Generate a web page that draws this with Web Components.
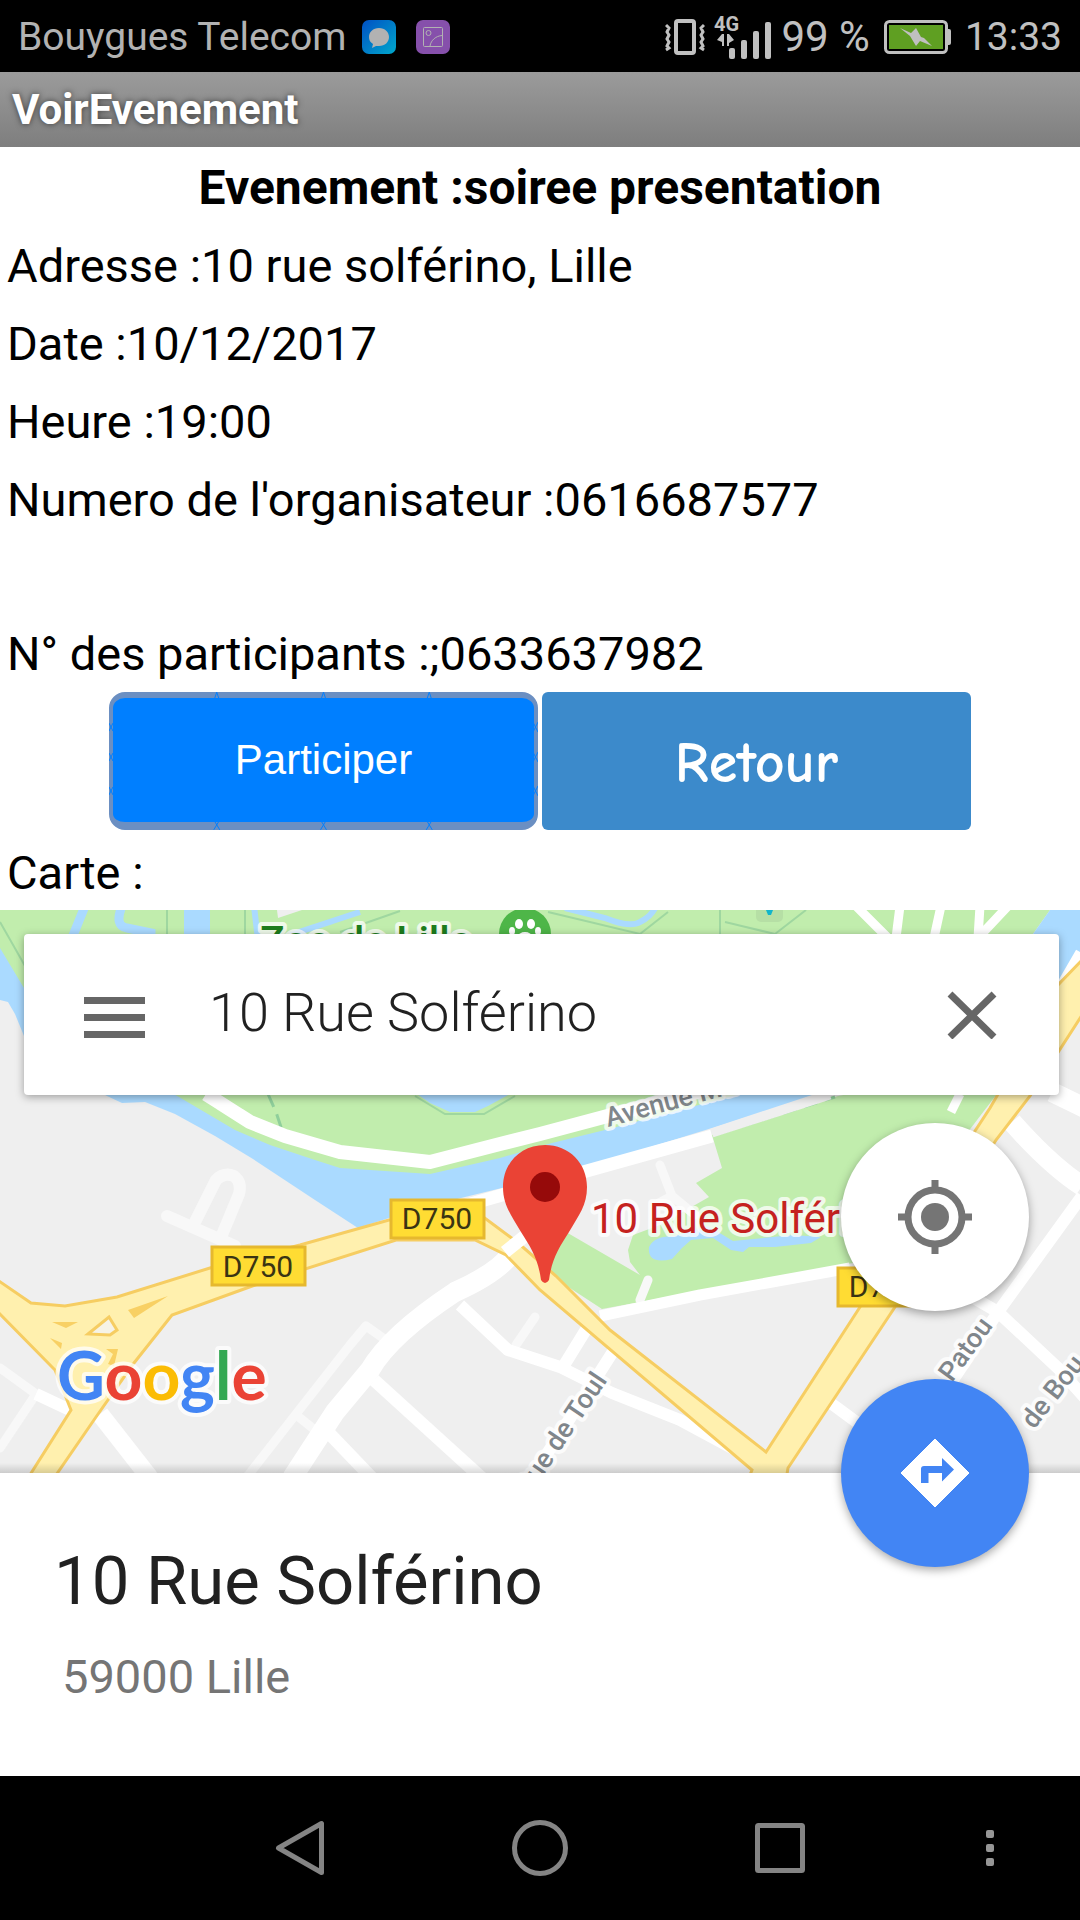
<!DOCTYPE html>
<html lang="fr">
<head>
<meta charset="utf-8">
<meta name="viewport" content="width=device-width, initial-scale=1">
<title>VoirEvenement</title>
<style>
  body {
    margin: 0;
    background: #fff;
    font-family: Roboto, "Liberation Sans", sans-serif;
  }
</style>
</head>
<body>

<event-screen>
  <status-bar slot="status" carrier="Bouygues Telecom" battery="99 %" time="13:33"></status-bar>
  <title-bar slot="title">VoirEvenement</title-bar>

  <event-line heading>Evenement :soiree presentation</event-line>
  <event-line>Adresse :10 rue solférino, Lille</event-line>
  <event-line>Date :10/12/2017</event-line>
  <event-line>Heure :19:00</event-line>
  <event-line>Numero de l'organisateur :0616687577</event-line>
  <event-line empty></event-line>
  <event-line>N° des participants :;0633637982</event-line>
  <button-row>
    <image-button kind="join">Participer</image-button>
    <image-button kind="back">Retour</image-button>
  </button-row>
  <event-line>Carte :</event-line>

  <map-view slot="map">
    <map-search slot="search" value="10 Rue Solférino"></map-search>
    <round-button slot="locate" label="Ma position">
      <svg width="76" height="76" viewBox="0 0 76 76" fill="none" stroke="#757575">
        <circle cx="38" cy="38" r="27" stroke-width="7"/>
        <circle cx="38" cy="38" r="14" fill="#757575" stroke="none"/>
        <path d="M38 1v11M38 64v11M1 38h11M64 38h11" stroke-width="7"/>
      </svg>
    </round-button>
    <round-button slot="directions" label="Itinéraire" primary>
      <svg width="70" height="70" viewBox="0 0 70 70">
        <path d="M35 1 69 35 35 69 1 35Z" fill="#fff" stroke="#fff" stroke-linejoin="round"/>
        <path d="M21 45V31q0-3 3-3h18v-8l12 11.500-12 12V35H28.500v10z" fill="#4285f4"/>
      </svg>
    </round-button>
  </map-view>
  <place-sheet slot="sheet">
    10 Rue Solférino
    <span slot="city">59000 Lille</span>
  </place-sheet>

  <nav-bar slot="nav"></nav-bar>
</event-screen>

<script>
  // Clones the markup of the subclass into an open shadow root
  class BaseElement extends HTMLElement {
    constructor() {
      super();
      const template = document.createElement("template");
      template.innerHTML = this.constructor.markup;
      this.attachShadow({ mode: "open" }).appendChild(template.content.cloneNode(true));
    }

    $(selector) {
      return this.shadowRoot.querySelector(selector);
    }
  }

  class EventScreen extends BaseElement {
    static markup = `
      <style>
        :host {
          display: flex;
          flex-direction: column;
          min-height: 100vh;
        }
        main {
          display: flex;
          flex-direction: column;
          flex: 1;
        }
        slot[name="sheet"]::slotted(*) {
          flex: 1;
        }
      </style>
      <slot name="status"></slot>
      <slot name="title"></slot>
      <main>
        <slot></slot>
        <slot name="map"></slot>
        <slot name="sheet"></slot>
      </main>
      <slot name="nav"></slot>
    `;
  }

  class StatusBar extends BaseElement {
    static markup = `
      <style>
        :host {
          display: flex;
          align-items: center;
          justify-content: space-between;
          box-sizing: border-box;
          height: 72px;
          padding: 2px 18px 0;
          background: #000;
          color: #b2b2b2;
          font-size: 39px;
          line-height: 70px;
          white-space: nowrap;
        }
        div {
          display: flex;
          align-items: center;
        }
        .apps { gap: 16px; }
        .apps svg + svg { margin-left: 4px; }
        .state { gap: 8px; color: #c0c0c0; }
        .battery { margin: 0 6px; }
        #battery { font-size: 42px; }
        svg { display: block; }
      </style>
      <div class="apps">
        <span id="carrier"></span>
        <svg width="34" height="34" viewBox="0 0 34 34">
          <defs>
            <linearGradient id="chat" x1="0" y1="0" x2="1" y2="1">
              <stop offset="0" stop-color="#0050c4"/>
              <stop offset="1" stop-color="#00a8cc"/>
            </linearGradient>
          </defs>
          <rect width="34" height="34" rx="7" fill="url(#chat)"/>
          <path d="M17 8c6 0 10 4 10 9s-4 9-10 9h-3l-4 2 1-4c-3-2-4-4-4-7 0-5 4-9 10-9z" fill="#b2b2b2"/>
        </svg>
        <svg width="34" height="34" viewBox="0 0 34 34" fill="none" stroke="#b2b2b2">
          <rect width="34" height="34" rx="7" fill="#8650ab" stroke="none"/>
          <rect x="7.500" y="7.500" width="19" height="19" rx="1"/>
          <circle cx="12.500" cy="13" r="2.500"/>
          <path d="M14 26c1-6 6-10 12-10.500"/>
        </svg>
      </div>
      <div class="state">
        <svg width="40" height="36" viewBox="0 0 40 36" fill="none" stroke="#c0c0c0">
          <rect x="11" y="2" width="18" height="32" rx="2" stroke-width="4"/>
          <path d="M1 6l3 3-2 4 2 3-2 4 2 3-2 4 2 2-3 2M39 6l-3 3 2 4-2 3 2 4-2 3 2 4-2 2 3 2" stroke-width="3"/>
        </svg>
        <svg width="60" height="48" viewBox="0 0 60 48" fill="#c0c0c0">
          <text x="1" y="18" font-size="20" font-weight="700">4G</text>
          <path d="M4 27l5-6h2v12H9v-4zM14 21h2l5 6-5 3v3h-2z"/>
          <rect x="16" y="35" width="6" height="11" rx="2"/>
          <rect x="28" y="27" width="6" height="19" rx="2"/>
          <rect x="40" y="18" width="6" height="28" rx="2"/>
          <rect x="52" y="9" width="6" height="37" rx="2"/>
        </svg>
        <span id="battery"></span>
        <svg class="battery" width="67" height="34" viewBox="0 0 67 34">
          <rect x="1.500" y="1.500" width="61" height="31" rx="4" fill="#000" stroke="#c0c0c0" stroke-width="3"/>
          <rect x="5" y="5" width="54" height="24" fill="#5f9f22"/>
          <path d="M64 9h1q2 0 2 2v12q0 2-2 2h-1z" fill="#c0c0c0"/>
          <path d="M16 8l11 5 5-5 5 9 3 1 8 8-12-5-4 5-6-10z" fill="#c0c0c0"/>
        </svg>
        <span id="time"></span>
      </div>
    `;

    connectedCallback() {
      for (const name of ["carrier", "battery", "time"]) {
        this.$("#" + name).textContent = this.getAttribute(name);
      }
    }
  }

  class TitleBar extends BaseElement {
    static markup = `
      <style>
        :host {
          display: block;
          background: linear-gradient(#9b9b9b, #7e7e7e);
        }
        h1 {
          margin: 0;
          padding: 0 12px;
          color: #fff;
          font-size: 42px;
          font-weight: 700;
          line-height: 75px;
          text-shadow: 0 0 6px rgba(0, 0, 0, .6);
        }
      </style>
      <h1><slot></slot></h1>
    `;
  }

  class EventLine extends BaseElement {
    static markup = `
      <style>
        :host {
          display: block;
          padding: 4px 7px 0;
          color: #000;
          font-size: 47px;
          line-height: 74px;
        }
        :host([heading]) {
          font-size: 48px;
          font-weight: 700;
          text-align: center;
        }
        :host([empty]) {
          height: 72px;
        }
      </style>
      <slot></slot>
    `;
  }

  class ButtonRow extends BaseElement {
    static markup = `
      <style>
        :host {
          display: flex;
          justify-content: center;
          gap: 4px;
          padding: 1px 0 2px;
        }
      </style>
      <slot></slot>
    `;
  }

  class ImageButton extends BaseElement {
    static markup = `
      <style>
        :host {
          display: block;
          position: relative;
          flex: 0 1 429px;
        }
        button {
          display: block;
          box-sizing: border-box;
          width: 100%;
          height: 138px;
          padding: 4px 0 0;
          border: 0;
          border-radius: 6px;
          background: #3c8acb;
          color: #fff;
          font-family: "Comic Sans MS", "Comic Neue", Lato, sans-serif;
          font-size: 58px;
          font-weight: 700;
        }
        :host([kind="join"]) button {
          padding: 0;
          border: solid #6b8fc2;
          border-width: 6px 4px 8px;
          border-radius: 16px;
          background: #007fff;
          font-family: "Liberation Sans", sans-serif;
          font-size: 42px;
          font-weight: 400;
        }
        svg {
          position: absolute;
          inset: 0;
          width: 100%;
          height: 100%;
          pointer-events: none;
        }
        :host([kind="back"]) svg { display: none; }
      </style>
      <button type="button"><slot></slot></button>
      <svg viewBox="0 0 430 138" fill="none" stroke="#007fff">
        <path d="M106 6l2-6 2 6M213 6l2-6 2 6M319 6l2-6 2 6"/>
        <path d="M105 138l6-10M111 138l-6-10M212 138l6-10M218 138l-6-10M318 138l6-10M324 138l-6-10"/>
        <path d="M0 31l4 8M4 31l-4 8M0 61l4 8M4 61l-4 8M0 95l4 8M4 95l-4 8"/>
        <path d="M425 30l5 10M430 30l-5 10M425 60l5 10M430 60l-5 10M425 94l5 10M430 94l-5 10"/>
      </svg>
    `;
  }

  class MapView extends BaseElement {
    static markup = `
      <style>
        :host {
          display: grid;
          grid-template: minmax(0, 1fr) / minmax(0, 1fr);
          position: relative;
          z-index: 1;
          min-height: 0;
          aspect-ratio: 1080 / 563;
        }
        .tiles {
          display: block;
          grid-area: 1 / 1;
          width: 100%;
          height: 100%;
          min-height: 0;
        }
        .over {
          grid-area: 1 / 1;
          padding: 24px 21px 0 24px;
        }
        .edge {
          grid-area: 1 / 1;
          align-self: end;
          height: 10px;
          background: linear-gradient(rgba(0, 0, 0, 0), rgba(0, 0, 0, .15));
        }
        .locate, .directions {
          position: absolute;
          right: 51px;
        }
        .locate { bottom: 162px; }
        .directions { bottom: -94px; }
        .halo {
          paint-order: stroke;
          stroke: rgba(255, 255, 255, .75);
          stroke-width: 8px;
          stroke-linejoin: round;
        }
      </style>
      <svg class="tiles" viewBox="0 910 1080 563" preserveAspectRatio="xMidYMid slice">
        <rect y="910" width="1080" height="563" fill="#efefef"/>

        <!-- river -->
        <path fill="#aadaff" d="M0 940V1000L8 1002 15 1014 24 1036 60 1070 107 1096 122 1103 145 1102 175 1114 215 1136 253 1159 315 1200 358 1228 389 1218 461 1198 583 1168 712 1128 815 1094 700 1040 100 1000z"/>
        <!-- parks -->
        <path fill="#c1edad" d="M0 910V948L24 988 90 1050 179 1097 235 1130 270 1145 315 1160 340 1168 430 1174 500 1158 552 1143 605 1130 740 1094 800 1060 1020 960 1033 934 1050 910z"/>
        <path fill="#c1edad" d="M712 1135L838 1096 980 1070 1024 1000 1070 920 1040 1010 1000 1090 870 1260 836 1266 602 1309 550 1275V1220L566 1232 640 1275 630 1262 628 1250 633 1235 660 1225 709 1197 696 1183 722 1168z"/>
        <path fill="#aadaff" d="M1050 910H1080V958L1058 985 1033 934zM417 1094H510L488 1106 475 1112H450L430 1103z"/>
        <path fill="#aadaff" d="M649 1247q5-11 25-11l34-10 25 15 60-6 28 2-10 6-36 4-26 0-6 5-12-2-18-12-22 2-9 8-10 11q-25 6-23-12z"/>
        <g fill="none" stroke="#aadaff" stroke-width="8">
          <path d="M72 938L85 906M122 906q-8 20 5 22l24 5V942" stroke-width="9"/>
          <path d="M197 906V940" stroke-width="26"/>
          <path d="M254 906L258 940M290 935L360 912M565 908l40 10q25 10 35 4 12-6 16-16" stroke-width="6"/>
        </g>
        <path d="M277 910h25l-24 8z" fill="#efefef"/>
        <path fill="none" stroke="#9fd7a0" stroke-width="2" d="M0 922L25 966M167 910V935M245 910V935M340 932L400 911M548 912L640 934 668 912M720 910V935M725 922L775 934 806 910M415 1096L445 1114H484L515 1096"/>
        <path fill="none" stroke="#8fcf9b" stroke-width="3" stroke-dasharray="14 8" d="M268 1094l8 18 6 18M720 1133L835 1097"/>
        <rect x="756" y="904" width="27" height="18" rx="5" fill="#b6dfa5"/>
        <path d="M766 910h7l-2 5h-3z" fill="#12b5cb"/>

        <!-- minor streets -->
        <g fill="none" stroke="#f8f8f8" stroke-width="9" stroke-linejoin="round" stroke-linecap="round">
          <path d="M167 1216L235 1246M195 1222L216 1180q8-8 18-4 8 6 5 18L222 1235" stroke-width="12"/>
          <path d="M383 1338L366 1326 350 1345 246 1478M300 1418L315 1430M516 1345L535 1317"/>
          <path d="M0 1368L36 1394 0 1448M660 1165L672 1196 655 1205M672 1196L695 1215M648 1280L640 1300"/>
        </g>
        <g fill="none" stroke="#fff" stroke-width="12" stroke-linejoin="round">
          <path d="M36 1394L70 1410M460 1305L508 1350 560 1367 612 1393 680 1420 745 1455M587 1328L563 1367M614 1350L600 1372 530 1480"/>
          <path d="M206 1094L250 1122 285 1136 340 1152 430 1162 500 1144 540 1134 600 1118 720 1086" stroke-width="14"/>
          <path d="M460 1207L583 1172 712 1136" stroke-width="13"/>
          <path d="M712 1133L830 1095" stroke="#efefef" stroke-width="9"/>
          <path d="M100 1414L150 1478" stroke-width="18"/>
          <path d="M514 1250Q500 1272 455 1292Q390 1335 370 1370L335 1412 292 1478" stroke-width="20"/>
          <path d="M374 1380L484 1480M326 1430L372 1478" stroke-width="13"/>
          <path d="M600 1316L700 1295 850 1268" stroke-width="11"/>
          <path d="M1082 1196L998 1312 900 1460M960 1290L998 1312 1060 1370 1085 1398M832 1404L870 1432"/>
          <path d="M1012 1122Q1050 1165 1082 1186M1052 1092L1085 1108" stroke-width="20"/>
          <path d="M856 906L888 938M900 906L896 938M941 906L934 938M980 906L978 938M1008 906L978 938M951 1112L960 1094M1080 952L1058 990" stroke-width="9"/>
        </g>

        <!-- D750 -->
        <g fill="#fff0ae" stroke="#f6cd62" stroke-width="3">
          <path d="M1084 958L1058 985 1012 1070 990 1108 860 1307 766 1452 610 1330 556 1276 517 1242 482 1216 389 1220 300 1245 210 1268 117 1297 65 1306 31 1303 -4 1279V1310L55 1370 71 1410 28 1478H54L96 1417 134 1363 172 1315 255 1285 396 1240 475 1240 506 1255 540 1290 752 1470 748 1480H786L788 1468 895 1307 996 1140 1030 1096 1084 1012z"/>
          <path d="M88 1334L109 1317 117 1330 110 1335z" fill="#f6f3e6"/>
        </g>
        <path fill="#f8d064" d="M52 1322h26l-12 6zM50 1338l12 5-1 6zM128 1310l40-14-34 22zM106 1349h12l-4 17-6-2 5-10z"/>
        <path d="M505 1252L530 1232" stroke="#fff" stroke-width="13"/>

        <!-- labels -->
        <text class="halo" x="260" y="955" font-size="41" font-weight="500" fill="#1d7d1d">Zoo de Lille</text>
        <circle cx="525" cy="934" r="26" fill="#4eb648"/>
        <g fill="#fff">
          <ellipse cx="519" cy="924" rx="4" ry="5"/>
          <ellipse cx="531" cy="924" rx="4" ry="5"/>
          <ellipse cx="512" cy="931" rx="3" ry="4"/>
          <ellipse cx="538" cy="931" rx="3" ry="4"/>
          <ellipse cx="525" cy="937" rx="7" ry="5"/>
        </g>
        <g font-size="27" font-weight="500" fill="#80868b">
          <text class="halo" transform="translate(608 1127) rotate(-15)">Avenue Ma</text>
          <text class="halo" transform="translate(529 1497) rotate(-56)">Rue de Toul</text>
          <text class="halo" transform="translate(952 1383) rotate(-54)">Patou</text>
          <text class="halo" transform="translate(1034 1430) rotate(-52)">de Bou</text>
        </g>
        <g fill="#ffdc33" stroke="#e6b82e" stroke-width="3">
          <rect x="212" y="1247" width="93" height="38"/>
          <rect x="391" y="1200" width="93" height="38"/>
          <rect x="838" y="1268" width="93" height="38"/>
        </g>
        <g font-size="30" fill="#3a3413" text-anchor="middle">
          <text x="258" y="1277">D750</text>
          <text x="437" y="1229">D750</text>
          <text x="884" y="1297">D750</text>
        </g>
        <text class="halo" x="591" y="1233" font-size="42" fill="#c5221f">10 Rue Solférino</text>

        <path d="M545 1145c24 0 42 18 42 42 0 18-8 28-18 45-10 16-17 26-20 48q-4 6-8 0c-3-22-10-32-20-48-10-17-18-27-18-45 0-24 18-42 42-42z" fill="#ea4335"/>
        <circle cx="545" cy="1187" r="15" fill="#960a0a"/>

        <text class="halo" x="57" y="1400" font-family="Lato, sans-serif" font-size="66" font-weight="700"><tspan fill="#4285f4">G</tspan><tspan fill="#ea4335">o</tspan><tspan fill="#fbbc05">o</tspan><tspan fill="#4285f4">g</tspan><tspan fill="#34a853">l</tspan><tspan fill="#ea4335">e</tspan></text>
      </svg>
      <div class="edge"></div>
      <div class="over"><slot name="search"></slot></div>
      <div class="locate"><slot name="locate"></slot></div>
      <div class="directions"><slot name="directions"></slot></div>
    `;
  }

  class MapSearch extends BaseElement {
    static markup = `
      <style>
        :host {
          display: flex;
          align-items: center;
          gap: 64px;
          height: 161px;
          box-sizing: border-box;
          padding: 0 60px;
          border-radius: 4px;
          background: #fff;
          box-shadow: 0 2px 8px rgba(0, 0, 0, .35);
        }
        button {
          display: block;
          padding: 0;
          border: 0;
          background: none;
        }
        svg { display: block; }
        input {
          flex: 1;
          min-width: 0;
          padding: 0 0 4px;
          border: 0;
          outline: 0;
          background: none;
          color: #212121;
          font: 300 54px/72px Roboto, "Liberation Sans", sans-serif;
        }
      </style>
      <button type="button" aria-label="Menu">
        <svg width="61" height="48" viewBox="0 0 61 48" fill="#666">
          <path d="M0 6h61v7H0zM0 23h61v7H0zM0 40h61v7H0z"/>
        </svg>
      </button>
      <input type="text" aria-label="Rechercher">
      <button type="button" aria-label="Effacer">
        <svg width="56" height="48" viewBox="0 0 56 48" stroke="#666" stroke-width="7">
          <path d="M7 3L51 46M51 3L7 46"/>
        </svg>
      </button>
    `;

    connectedCallback() {
      this.$("input").value = this.getAttribute("value");
    }
  }

  class RoundButton extends BaseElement {
    static markup = `
      <style>
        :host { display: block; }
        button {
          display: grid;
          place-items: center;
          width: 188px;
          height: 188px;
          padding: 0;
          border: 0;
          border-radius: 50%;
          background: #fff;
          box-shadow: 0 3px 10px rgba(0, 0, 0, .35);
        }
        :host([primary]) button { background: #4285f4; }
      </style>
      <button type="button"><slot></slot></button>
    `;

    connectedCallback() {
      this.$("button").setAttribute("aria-label", this.getAttribute("label"));
    }
  }

  class PlaceSheet extends BaseElement {
    static markup = `
      <style>
        :host {
          display: block;
          box-sizing: border-box;
          padding: 68px 54px 40px;
          background: #fff;
        }
        h2, p {
          margin: 0;
          font-weight: 400;
        }
        h2 {
          color: #212121;
          font-size: 67px;
          line-height: 80px;
        }
        p {
          padding: 24px 8px 0;
          color: #757575;
          font-size: 47px;
          line-height: 64px;
        }
      </style>
      <h2><slot></slot></h2>
      <p><slot name="city"></slot></p>
    `;
  }

  class NavBar extends BaseElement {
    static markup = `
      <style>
        :host {
          display: grid;
          grid-template-columns: 3fr 4fr 4fr 4fr 3fr;
          align-items: center;
          height: 144px;
          background: #000;
        }
        button {
          display: grid;
          place-items: center;
          height: 100%;
          padding: 0;
          border: 0;
          background: none;
        }
        .back { grid-column: 2; }
      </style>
      <button type="button" class="back" aria-label="Retour">
        <svg width="60" height="60" viewBox="0 0 60 60" fill="none" stroke="#848484" stroke-width="5" stroke-linejoin="round">
          <path d="M51.500 5.500v49L8.500 30z"/>
        </svg>
      </button>
      <button type="button" aria-label="Accueil">
        <svg width="60" height="60" viewBox="0 0 60 60" fill="none" stroke="#848484" stroke-width="5">
          <circle cx="30" cy="30" r="25.500"/>
        </svg>
      </button>
      <button type="button" aria-label="Applications">
        <svg width="60" height="60" viewBox="0 0 60 60" fill="none" stroke="#848484" stroke-width="5">
          <rect x="7.500" y="7.500" width="45" height="45" rx="1"/>
        </svg>
      </button>
      <button type="button" aria-label="Options">
        <svg width="8" height="36" viewBox="0 0 8 36" fill="#969696">
          <rect width="8" height="8" rx="2"/>
          <rect y="14" width="8" height="8" rx="2"/>
          <rect y="28" width="8" height="8" rx="2"/>
        </svg>
      </button>
    `;
  }

  customElements.define("event-screen", EventScreen);
  customElements.define("status-bar", StatusBar);
  customElements.define("title-bar", TitleBar);
  customElements.define("event-line", EventLine);
  customElements.define("button-row", ButtonRow);
  customElements.define("image-button", ImageButton);
  customElements.define("map-view", MapView);
  customElements.define("map-search", MapSearch);
  customElements.define("round-button", RoundButton);
  customElements.define("place-sheet", PlaceSheet);
  customElements.define("nav-bar", NavBar);
</script>
</body>
</html>
